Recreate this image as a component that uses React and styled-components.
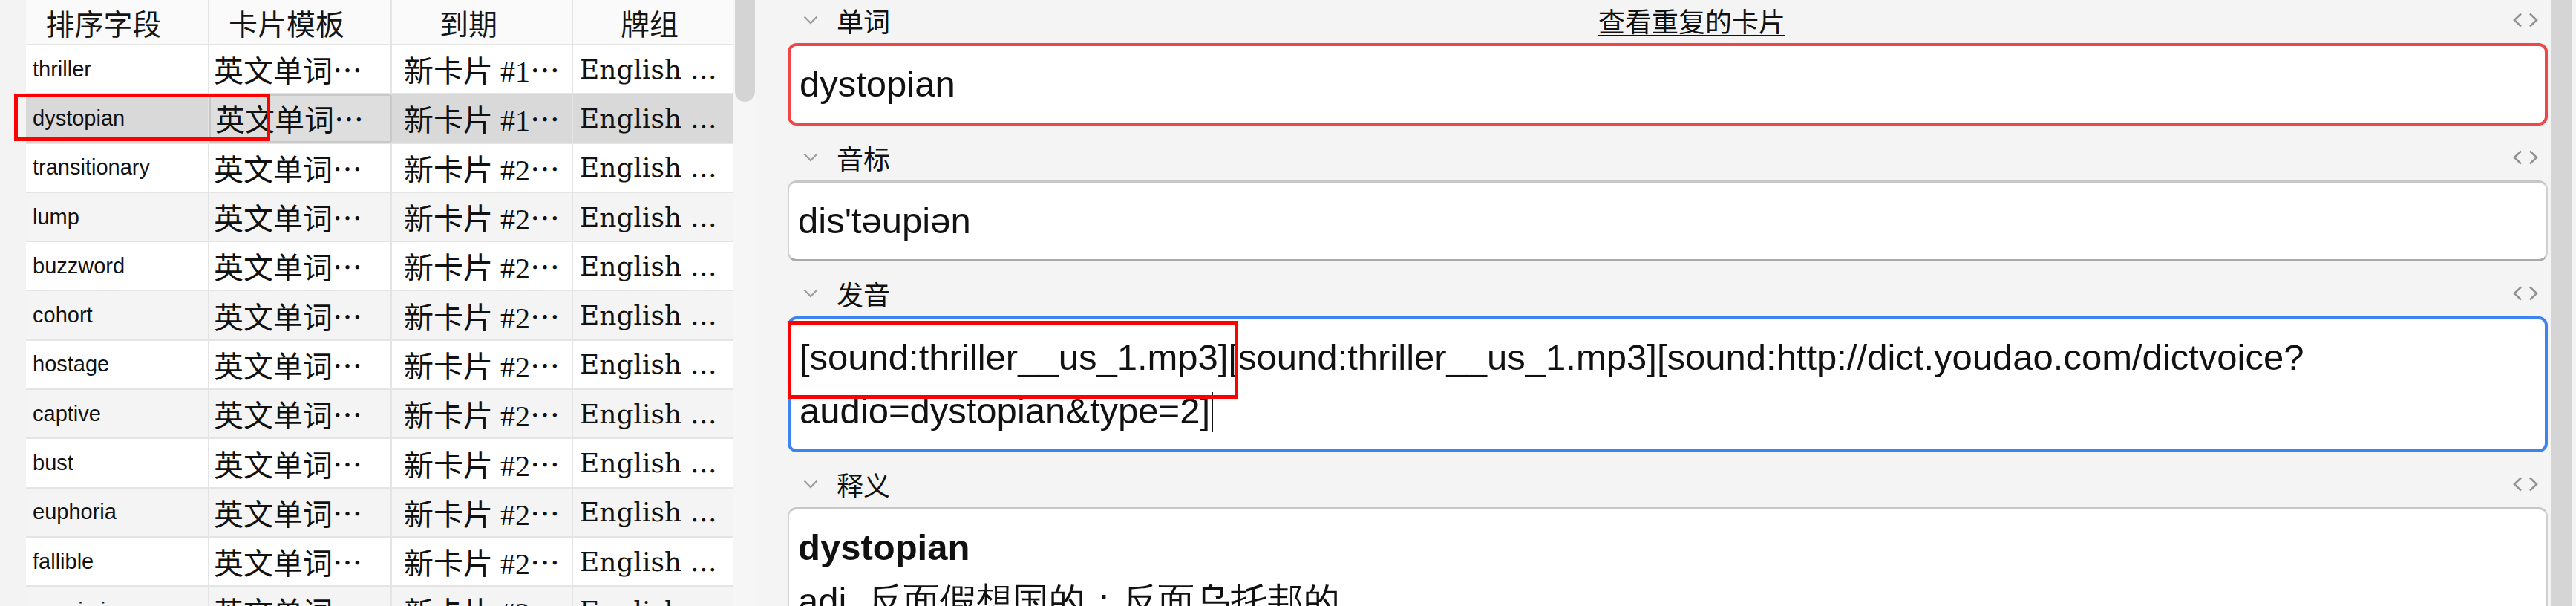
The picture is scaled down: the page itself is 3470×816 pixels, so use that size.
import React from 'react';
import styled, { createGlobalStyle, css } from 'styled-components';

const GlobalStyle = createGlobalStyle`
  html, body { margin: 0; padding: 0; background: #f4f4f4; }
  body { width: 3470px; height: 816px; overflow: hidden; font-family: "Liberation Sans", Arial, sans-serif; }
  * { box-sizing: border-box; }
`;

const CJK = `"Noto Sans CJK SC", sans-serif`;

const Page = styled.div`
  position: relative;
  display: flex;
  width: 3470px;
  height: 816px;
  overflow: hidden;
  background: #f4f4f4;
`;

const LeftGutter = styled.div`
  width: 35px;
  flex: none;
  background: #f3f3f3;
`;

const Table = styled.div`
  width: 953px;
  flex: none;
  display: flex;
  flex-direction: column;
  background: #fff;
`;

const Row = styled.div`
  flex: none;
  display: grid;
  grid-template-columns: 247px 246px 244px 216px;
  height: ${(p) => (p.$header ? '61px' : '66.3px')};
  border-bottom: 2px solid #e4e4e4;
  background: ${(p) =>
    p.$selected ? '#d9d9d9' : p.$header ? '#fafafa' : p.$alt ? '#f4f4f4' : '#ffffff'};
`;

const Cell = styled.div`
  display: flex;
  align-items: center;
  overflow: hidden;
  white-space: nowrap;
  color: #111;
  padding-left: ${(p) => p.$pl || 0}px;
  border-right: ${(p) => (p.$last ? 'none' : '2px solid #e4e4e4')};
  ${(p) =>
    p.$focus &&
    css`
      background: #dedede;
      border: 2px solid #c8c8c8;
      border-radius: 3px;
    `}
`;

const HeadCell = styled.div`
  display: flex;
  align-items: center;
  justify-content: center;
  padding-right: ${(p) => p.$pr}px;
  border-right: ${(p) => (p.$last ? 'none' : '2px solid #e4e4e4')};
  font-family: ${CJK};
  font-size: 39px;
  color: #151515;
`;

const WordText = styled.span`
  font-family: "Liberation Sans", Arial, sans-serif;
  font-size: 29px;
`;

const NoteText = styled.span`
  font-family: ${CJK};
  font-size: 40px;
`;

const DueText = styled.span`
  font-family: "Liberation Serif", "Noto Sans CJK SC", serif;
  font-size: 40px;
`;

const CjkEllipsis = styled.span`
  font-family: ${CJK};
`;

const DeckText = styled.span`
  font-family: "DejaVu Serif", serif;
  font-size: 36px;
`;

const TableScroll = styled.div`
  width: 30px;
  flex: none;
  background: #f6f6f6;
  padding-left: 2px;
`;

const TableThumb = styled.div`
  width: 27px;
  height: 137px;
  background: #d4d4d4;
  border-radius: 0 0 14px 14px;
`;

const Editor = styled.div`
  flex: 1;
  min-width: 0;
  display: flex;
  flex-direction: column;
  padding: 0 4px 0 43px;
  background: #f4f4f4;
`;

const Field = styled.div`
  display: flex;
  flex-direction: column;
  margin-bottom: 16px;
  flex: none;
`;

const LabelRow = styled.div`
  height: 58px;
  display: flex;
  align-items: center;
  padding: 0 13px 4px 21px;
`;

const Label = styled.span`
  margin-left: 25px;
  font-family: ${CJK};
  font-size: 36px;
  color: #111;
`;

const LinkArea = styled.div`
  flex: 1;
  text-align: center;
  padding-right: 26px;
`;

const DupLink = styled.span`
  font-family: ${CJK};
  font-size: 36px;
  color: #111;
  text-decoration: underline;
  text-decoration-thickness: 2px;
  text-underline-offset: 4px;
`;

const Box = styled.div`
  background: #fff;
  border-radius: 12px;
  padding: 15px 12px 16px;
  font-family: "Liberation Sans", Arial, sans-serif;
  font-size: 49px;
  line-height: 72px;
  color: #111;
  ${(p) =>
    p.$variant === 'error'
      ? css`border: 4px solid #ef4747;`
      : p.$variant === 'focus'
      ? css`border: 4px solid #3d84f1;`
      : css`
          border: 2px solid #d0d0d0;
          border-top: 3px solid #c7c7c7;
          border-bottom: 3px solid #a9a9a9;
        `}
`;

const Bold = styled.div`
  font-weight: bold;
`;

const Caret = styled.span`
  display: inline-block;
  width: 2px;
  height: 54px;
  margin-left: 2px;
  background: #111;
  vertical-align: -12px;
`;

const EditorScroll = styled.div`
  width: 34px;
  flex: none;
  background: #f4f4f4;
`;

const EditorThumb = styled.div`
  width: 28px;
  height: 100%;
  background: #d5d5d5;
`;

const Annotation = styled.div`
  position: absolute;
  left: ${(p) => p.$x}px;
  top: ${(p) => p.$y}px;
  width: ${(p) => p.$w}px;
  height: ${(p) => p.$h}px;
  border: 5px solid #ff0000;
  pointer-events: none;
`;

const Chevron = () => (
  <svg width="20" height="12" viewBox="0 0 20 12">
    <polyline points="1.5,1.5 10,10 18.5,1.5" fill="none" stroke="#a0a0a0" strokeWidth="2.4" />
  </svg>
);

const CodeIcon = () => (
  <svg width="34" height="20" viewBox="0 0 34 20">
    <polyline points="11,1.5 2,10 11,18.5" fill="none" stroke="#929292" strokeWidth="2.6" />
    <polyline points="23,1.5 32,10 23,18.5" fill="none" stroke="#929292" strokeWidth="2.6" />
  </svg>
);

const rows = [
  ['thriller', '1'],
  ['dystopian', '1'],
  ['transitionary', '2'],
  ['lump', '2'],
  ['buzzword', '2'],
  ['cohort', '2'],
  ['hostage', '2'],
  ['captive', '2'],
  ['bust', '2'],
  ['euphoria', '2'],
  ['fallible', '2'],
  ['pessimism', '2'],
];

const FieldHeader = ({ label, link }) => (
  <LabelRow>
    <Chevron />
    <Label>{label}</Label>
    <LinkArea>{link && <DupLink>{link}</DupLink>}</LinkArea>
    <CodeIcon />
  </LabelRow>
);

export default function App() {
  return (
    <>
      <GlobalStyle />
      <Page>
        <LeftGutter />
        <Table>
          <Row $header>
            <HeadCell $pr={36}>排序字段</HeadCell>
            <HeadCell $pr={36}>卡片模板</HeadCell>
            <HeadCell $pr={36}>到期</HeadCell>
            <HeadCell $pr={10} $last>牌组</HeadCell>
          </Row>
          {rows.map(([word, n], i) => {
            const selected = i === 1;
            return (
              <Row key={word} $selected={selected} $alt={i % 2 === 1}>
                <Cell $pl={9}>
                  <WordText>{word}</WordText>
                </Cell>
                <Cell $pl={6} $focus={selected}>
                  <NoteText>英文单词…</NoteText>
                </Cell>
                <Cell $pl={16}>
                  <DueText>
                    新卡片 #{n}
                    <CjkEllipsis>…</CjkEllipsis>
                  </DueText>
                </Cell>
                <Cell $pl={9} $last>
                  <DeckText>English …</DeckText>
                </Cell>
              </Row>
            );
          })}
        </Table>
        <TableScroll>
          <TableThumb />
        </TableScroll>
        <Editor>
          <Field>
            <FieldHeader label="单词" link="查看重复的卡片" />
            <Box $variant="error">dystopian</Box>
          </Field>
          <Field>
            <FieldHeader label="音标" />
            <Box>dis'təupiən</Box>
          </Field>
          <Field>
            <FieldHeader label="发音" />
            <Box $variant="focus">
              [sound:thriller__us_1.mp3][sound:thriller__us_1.mp3][sound:http://dict.youdao.com/dictvoice?
              <br />
              audio=dystopian&amp;type=2]
              <Caret />
            </Box>
          </Field>
          <Field>
            <FieldHeader label="释义" />
            <Box>
              <Bold>dystopian</Bold>
              <div>adj. 反面假想国的；反面乌托邦的</div>
            </Box>
          </Field>
        </Editor>
        <EditorScroll>
          <EditorThumb />
        </EditorScroll>
        <Annotation $x={19} $y={126} $w={345} $h={64} />
        <Annotation $x={1061} $y={432} $w={607} $h={105} />
      </Page>
    </>
  );
}
